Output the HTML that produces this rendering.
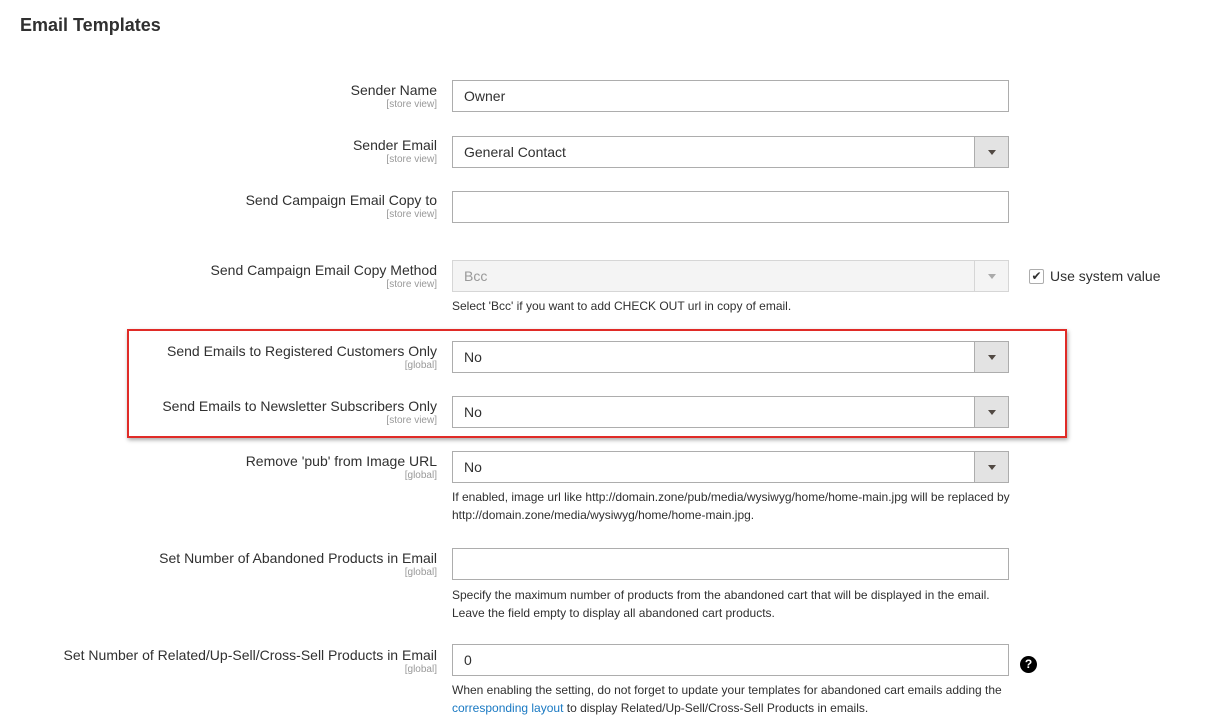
<!DOCTYPE html><html><head><style>
body{margin:0;width:1218px;height:726px;background:#fff;font-family:"Liberation Sans",sans-serif;color:#303030;position:relative;overflow:hidden}
.a{position:absolute}
h1{position:absolute;left:20px;top:15px;margin:0;font-size:18px;font-weight:bold;color:#303030}
.lbl{position:absolute;right:781px;text-align:right;font-size:14px;white-space:nowrap;line-height:17px}
.lbl small{display:block;font-size:10px;color:#999;line-height:11px}
.in{position:absolute;left:452px;width:555px;height:30px;border:1px solid #adadad;background:#fff;font-size:14px;line-height:30px;padding-left:11px;box-sizing:content-box}
.in.sel:after{content:"";position:absolute;right:0;top:0;width:33px;height:30px;background:#e3e3e3;border-left:1px solid #adadad}
.in.sel:before{content:"";position:absolute;right:12px;top:13px;border:4px solid transparent;border-top:5px solid #514943;border-bottom:0;z-index:2}
.dis{background:#f4f4f4;color:#999;border-color:#d6d6d6}
.dis.sel:after{background:#f4f4f4;border-left-color:#d6d6d6}
.dis.sel:before{border-top-color:#aaa}
.note{position:absolute;left:452px;font-size:12px;line-height:18px;color:#303030;width:560px}
</style></head><body>
<h1>Email Templates</h1>
<div class="lbl" style="top:82px">Sender Name<small>[store view]</small></div>
<div class="in" style="top:80px;width:544px">Owner</div>
<div class="lbl" style="top:137px">Sender Email<small>[store view]</small></div>
<div class="in sel" style="top:136px;width:544px">General Contact</div>
<div class="lbl" style="top:192px">Send Campaign Email Copy to<small>[store view]</small></div>
<div class="in" style="top:191px;width:544px"></div>
<div class="lbl" style="top:262px">Send Campaign Email Copy Method<small>[store view]</small></div>
<div class="in sel dis" style="top:260px;width:544px">Bcc</div>
<div class="a" style="left:1029px;top:269px;width:13px;height:13px;border:1px solid #adadad;border-radius:2px;font-size:12px;line-height:13px;text-align:center">✔</div>
<div class="a" style="left:1050px;top:268px;font-size:14px">Use system value</div>
<div class="note" style="top:297px">Select 'Bcc' if you want to add CHECK OUT url in copy of email.</div>
<div class="a" style="left:127px;top:329px;width:936px;height:105px;border:2px solid #e02b27;box-shadow:1px 2px 4px rgba(0,0,0,.35)"></div>
<div class="lbl" style="top:343px">Send Emails to Registered Customers Only<small>[global]</small></div>
<div class="in sel" style="top:341px;width:544px">No</div>
<div class="lbl" style="top:398px">Send Emails to Newsletter Subscribers Only<small>[store view]</small></div>
<div class="in sel" style="top:396px;width:544px">No</div>
<div class="lbl" style="top:453px">Remove 'pub' from Image URL<small>[global]</small></div>
<div class="in sel" style="top:451px;width:544px">No</div>
<div class="note" style="top:488px">If enabled, image url like http://domain.zone/pub/media/wysiwyg/home/home-main.jpg will be replaced by http://domain.zone/media/wysiwyg/home/home-main.jpg.</div>
<div class="lbl" style="top:550px">Set Number of Abandoned Products in Email<small>[global]</small></div>
<div class="in" style="top:548px;width:544px"></div>
<div class="note" style="top:586px">Specify the maximum number of products from the abandoned cart that will be displayed in the email. Leave the field empty to display all abandoned cart products.</div>
<div class="lbl" style="top:647px">Set Number of Related/Up-Sell/Cross-Sell Products in Email<small>[global]</small></div>
<div class="in" style="top:644px;width:544px">0</div>
<div class="a" style="left:1020px;top:656px;width:17px;height:17px;border-radius:50%;background:#000;color:#fff;font-size:12px;font-weight:bold;text-align:center;line-height:17px">?</div>
<div class="note" style="top:681px">When enabling the setting, do not forget to update your templates for abandoned cart emails adding the <span style="color:#1979c3">corresponding layout</span> to display Related/Up-Sell/Cross-Sell Products in emails.</div>
</body></html>
